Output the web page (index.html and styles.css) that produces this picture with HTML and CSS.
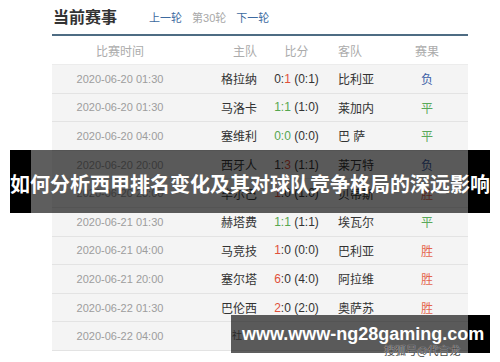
FILE: index.html
```html
<!DOCTYPE html>
<html lang="zh">
<head>
<meta charset="utf-8">
<title>当前赛事</title>
<link rel="stylesheet" href="styles.css">
</head>
<body>
<div class="page">
  <div class="head">
    <h1 class="title">当前赛事</h1>
    <nav class="nav">
      <a class="nav-link">上一轮</a>
      <span class="nav-cur">第30轮</span>
      <a class="nav-link">下一轮</a>
    </nav>
  </div>
  <div class="table">
    <div class="row hdr">
      <div class="c-time">比赛时间</div><div class="c-home">主队</div><div class="c-score">比分</div><div class="c-away">客队</div><div class="c-res">赛果</div>
    </div>
    <div class="row"><div class="c-time">2020-06-20 01:30</div><div class="c-home">格拉纳</div><div class="c-score">0:<b class="w">1</b> (0:1)</div><div class="c-away">比利亚</div><div class="c-res lose">负</div></div>
    <div class="row"><div class="c-time">2020-06-20 01:30</div><div class="c-home">马洛卡</div><div class="c-score"><b class="d">1:1</b> (1:0)</div><div class="c-away">莱加内</div><div class="c-res draw">平</div></div>
    <div class="row"><div class="c-time">2020-06-20 04:00</div><div class="c-home">塞维利</div><div class="c-score"><b class="d">0:0</b> (0:0)</div><div class="c-away">巴 萨</div><div class="c-res draw">平</div></div>
    <div class="row"><div class="c-time">2020-06-20 20:00</div><div class="c-home">西牙人</div><div class="c-score">1:<b class="w">3</b> (1:1)</div><div class="c-away">莱万特</div><div class="c-res lose">负</div></div>
    <div class="row"><div class="c-time">2020-06-20 23:00</div><div class="c-home">毕尔巴</div><div class="c-score"><b class="w">1</b>:0 (1:0)</div><div class="c-away">贝蒂斯</div><div class="c-res win">胜</div></div>
    <div class="row"><div class="c-time">2020-06-21 01:30</div><div class="c-home">赫塔费</div><div class="c-score"><b class="d">1:1</b> (1:1)</div><div class="c-away">埃瓦尔</div><div class="c-res draw">平</div></div>
    <div class="row"><div class="c-time">2020-06-21 04:00</div><div class="c-home">马竞技</div><div class="c-score"><b class="w">1</b>:0 (0:0)</div><div class="c-away">巴利亚</div><div class="c-res win">胜</div></div>
    <div class="row"><div class="c-time">2020-06-21 20:00</div><div class="c-home">塞尔塔</div><div class="c-score"><b class="w">6</b>:0 (4:0)</div><div class="c-away">阿拉维</div><div class="c-res win">胜</div></div>
    <div class="row"><div class="c-time">2020-06-22 01:30</div><div class="c-home">巴伦西</div><div class="c-score"><b class="w">2</b>:0 (2:0)</div><div class="c-away">奥萨苏</div><div class="c-res win">胜</div></div>
    <div class="row"><div class="c-time">2020-06-22 04:00</div><div class="c-home"></div><div class="c-score"></div><div class="c-away"></div><div class="c-res"></div></div>
  </div>

  <div class="banner">如何分析西甲排名变化及其对球队竞争格局的深远影响</div>
  <div class="site"><span class="site-pre">社</span>www.www-ng28gaming.com</div>
  <div class="mark">搜狐号@代言龙</div>
</div>
</body>
</html>
```
FILE: styles.css
```css
* { box-sizing: border-box; }
html, body { margin: 0; padding: 0; background: #fff; }
body {
  font-family: "Liberation Sans", "Noto Sans CJK SC", sans-serif;
  color: #333;
}
.page {
  position: relative;
  width: 500px;
  height: 362px;
  overflow: hidden;
}
.head {
  display: flex;
  align-items: center;
  height: 34px;
  padding: 0 0 2px 53px;
}
.title {
  margin: 0;
  font-size: 16px;
  font-weight: bold;
  color: #333;
  font-family: "Noto Sans CJK SC", sans-serif;
  line-height: 20px;
}
.nav {
  display: flex;
  gap: 10px;
  margin-left: 32px;
  margin-top: 3px;
  font-size: 11px;
  line-height: 14px;
}
.nav-link { color: #3d6aa0; }
.nav-cur { color: #a8a8a8; }

.table {
  margin-left: 52px;
  width: 416px;
  border-top: 2px solid #4e6c83;
}
.row {
  display: grid;
  grid-template-columns: 136px 69px 79px 50px 82px;
  align-items: center;
  height: 28.6px;
  background: #f4f4f4;
  border-bottom: 1px solid #e3e3e3;
  font-size: 12px;
}
.row.hdr {
  height: 29px;
  background: #fff;
  color: #ababab;
  border-bottom: 1px solid #ececec;
}
.c-time { text-align: center; }
.row:not(.hdr) .c-time { color: #9d9d9d; font-size: 11px; }
.c-home { text-align: right; white-space: nowrap; }
.c-score { text-align: center; white-space: nowrap; }
.c-away { text-align: left; padding-left: 2px; white-space: nowrap; }
.c-res { text-align: center; }
.row:not(.hdr) .c-home, .row:not(.hdr) .c-away, .row:not(.hdr) .c-score { color: #333; }
.c-score b { font-weight: normal; }
.c-score .w { color: #e0503a; }
.c-score .d { color: #55a64f; }
.lose { color: #3c5ea6; }
.draw { color: #5aa95a; }
.win { color: #e4654f; }

.banner {
  position: absolute;
  left: 10px;
  top: 150px;
  width: 480px;
  height: 63px;
  background: linear-gradient(to right, #000 21px, rgba(0,0,0,0.63) 21px, rgba(0,0,0,0.63) 458px, #000 458px);
  color: #fff;
  font-family: "Noto Sans CJK SC", sans-serif;
  font-weight: bold;
  font-size: 20px;
  line-height: 63px;
  text-align: center;
  white-space: nowrap;
  padding-top: 2px;
}
.site {
  position: absolute;
  left: 231px;
  top: 315px;
  width: 259px;
  height: 38px;
  background: linear-gradient(to right, rgba(0,0,0,0.63) 237px, #000 237px);
  color: #fff;
  font-family: "Liberation Sans", sans-serif;
  font-weight: bold;
  font-size: 18px;
  line-height: 38px;
  padding-left: 1px;
  white-space: nowrap;
}
.site-pre {
  font-family: "Noto Sans CJK SC", sans-serif;
  font-weight: normal;
  font-size: 10px;
  color: #2a2a2a;
  vertical-align: 1px;
}
.mark {
  position: absolute;
  left: 384px;
  top: 343px;
  font-family: "Noto Sans CJK SC", sans-serif;
  font-size: 11px;
  line-height: 14px;
  color: #4a4a4a;
  text-shadow: 0 0 1px #fff;
  white-space: nowrap;
}
```
